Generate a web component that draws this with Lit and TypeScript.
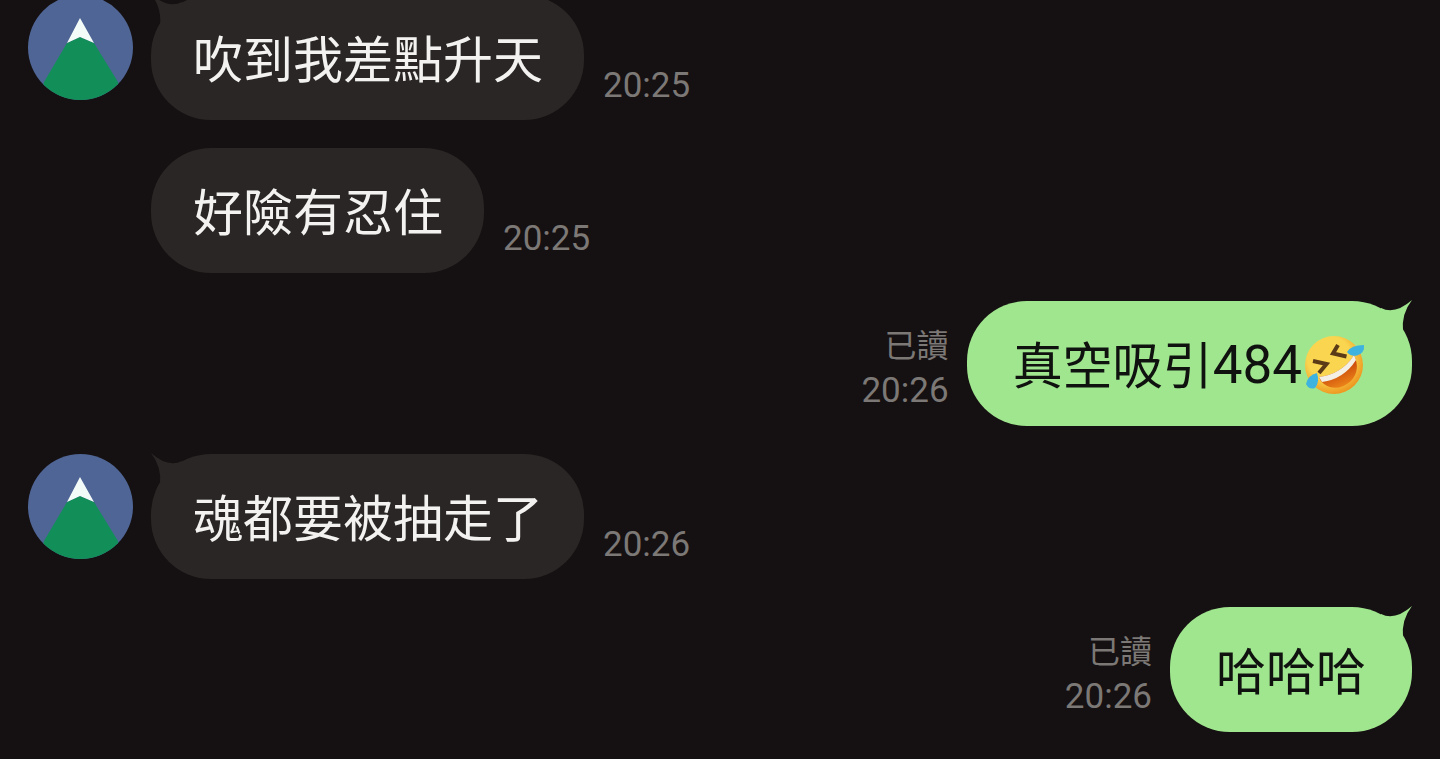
import { html, css, svg, LitElement } from 'lit';
import { customElement } from 'lit/decorators.js';

type Msg = { side: 'in' | 'out'; text: string; time: string; avatar?: boolean; emoji?: boolean };

const messages: Msg[] = [
  { side: 'in', text: '吹到我差點升天', time: '20:25', avatar: true },
  { side: 'in', text: '好險有忍住', time: '20:25' },
  { side: 'out', text: '真空吸引484', time: '20:26', emoji: true },
  { side: 'in', text: '魂都要被抽走了', time: '20:26', avatar: true },
  { side: 'out', text: '哈哈哈', time: '20:26' },
];

const avatar = html`<svg class="avatar" viewBox="0 0 105 105">
  <defs><clipPath id="c"><circle cx="52.5" cy="52.5" r="52.5"></circle></clipPath></defs>
  <g clip-path="url(#c)">
    <rect width="105" height="105" fill="#4f6596"></rect>
    <path d="M52 42 L39 48 L16 87 L10 110 H95 L90 87 L66 48 Z" fill="#128f59"></path>
    <path d="M52 23 L39 48 L52 42 L66 48 Z" fill="#f2fbf8"></path>
  </g>
</svg>`;

const emoji = html`<svg class="emoji" viewBox="0 0 62 58">
  <defs>
    <radialGradient id="f" cx="0.42" cy="0.38" r="0.62">
      <stop offset="0.6" stop-color="#fad650"></stop>
      <stop offset="1" stop-color="#ee9a22"></stop>
    </radialGradient>
    <linearGradient id="m" x1="0.3" y1="0.2" x2="0.7" y2="1">
      <stop offset="0.3" stop-color="#c9480c"></stop>
      <stop offset="1" stop-color="#f08a1a"></stop>
    </linearGradient>
  </defs>
  <circle cx="30" cy="29" r="29" fill="url(#f)"></circle>
  <path d="M15 41 Q38 38 50 19 Q57 34 47 45 Q33 57 20 48 Q16 45 15 41 Z" fill="url(#m)"></path>
  <path d="M15 41 Q38 38 50 19 L52 24 Q40 43 18 46 Z" fill="#f4efe4"></path>
  <path d="M34 9 L29 17.5 L42.5 20.5" stroke="#5b3a17" stroke-width="4" fill="none"></path>
  <path d="M9 25 L22.5 28 L15 37" stroke="#5b3a17" stroke-width="4" fill="none"></path>
  <path d="M43 16 Q47 9 60 9 Q61 17 53 19.5 Q47 21 43 16 Z" fill="#3fb3e0"></path>
  <path d="M13 37 Q4 39 2 48 Q5 54 11 52 Q16 46 13 37 Z" fill="#3fb3e0"></path>
</svg>`;

// tail drawn pointing to the top right, flipped for incoming bubbles
const tail = svg`<path d="M14 8 Q28 15 45 0 Q34 14 36 32 L14 32 Z" fill="currentColor"></path>`;

@customElement('app-root')
export class AppRoot extends LitElement {
  static styles = css`
    :host {
      display: block;
      height: 759px;
      overflow: hidden;
      background: #151011;
      font-family: 'Noto Sans CJK TC', 'Noto Sans', sans-serif;
    }
    .list {
      display: flex;
      flex-direction: column;
      gap: 28px;
      margin-top: -5px;
      padding: 0 28px;
    }
    .row {
      display: flex;
      height: 125px;
    }
    .row.out {
      justify-content: flex-end;
    }
    .avatar {
      width: 105px;
      height: 105px;
      flex: none;
    }
    .slot {
      width: 105px;
      flex: none;
    }
    .bubble {
      position: relative;
      display: flex;
      align-items: center;
      height: 125px;
      box-sizing: border-box;
      padding-bottom: 3px;
      border-radius: 60px;
      font-size: 50px;
      line-height: 1;
      white-space: nowrap;
    }
    .in .bubble {
      margin-left: 18px;
      padding-left: 42px;
      padding-right: 41px;
      background: #292625;
      color: #f3f2f1;
    }
    .out .bubble {
      padding-left: 46px;
      padding-right: 46px;
      background: #a0e68f;
      color: #10120f;
    }
    .tail {
      position: absolute;
      top: -1px;
      width: 45px;
      height: 32px;
    }
    .in .tail {
      left: 0;
      color: #292625;
      transform: scaleX(-1);
    }
    .out .tail {
      right: 0;
      color: #a0e68f;
    }
    .latin {
      margin-top: 6px;
      font-family: Roboto, sans-serif;
      font-size: 53px;
    }
    .emoji {
      width: 62px;
      height: 58px;
      margin-top: 6px;
      margin-left: 2px;
      flex: none;
    }
    .meta {
      display: flex;
      flex-direction: column;
      align-self: flex-end;
      color: #7b7876;
      font-family: Roboto, sans-serif;
      font-size: 35px;
      line-height: 40px;
      padding-bottom: 15px;
    }
    .in .meta {
      margin-left: 19px;
      padding-bottom: 14px;
    }
    .out .meta {
      margin-right: 18px;
      text-align: right;
    }
    .read {
      font-family: 'Noto Sans CJK TC', sans-serif;
      font-size: 32px;
      line-height: 46px;
      margin-bottom: 5px;
    }
  `;

  private bubbleText(m: Msg) {
    if (!m.emoji) return m.text;
    const cjk = m.text.slice(0, 4);
    const rest = m.text.slice(4);
    return html`<span>${cjk}</span><span class="latin">${rest}</span>${emoji}`;
  }

  render() {
    return html`
      <div class="list">
        ${messages.map(
          (m) => html`
            <div class="row ${m.side}">
              ${m.side === 'in' ? (m.avatar ? avatar : html`<div class="slot"></div>`) : ''}
              ${m.side === 'out'
                ? html`<div class="meta"><span class="read">已讀</span><span>${m.time}</span></div>`
                : ''}
              <div class="bubble">
                ${m.avatar || m.side === 'out'
                  ? html`<svg class="tail" viewBox="0 0 45 32">${tail}</svg>`
                  : ''}
                ${this.bubbleText(m)}
              </div>
              ${m.side === 'in' ? html`<div class="meta"><span>${m.time}</span></div>` : ''}
            </div>
          `
        )}
      </div>
    `;
  }
}
